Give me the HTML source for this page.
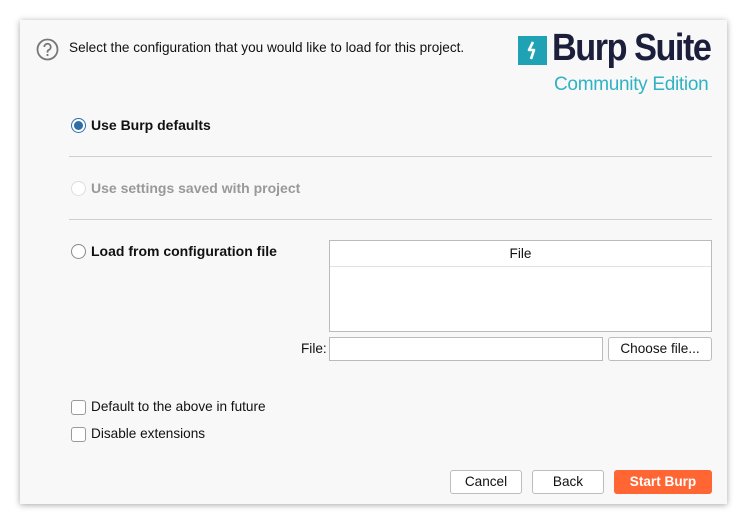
<!DOCTYPE html>
<html><head><meta charset="utf-8"><style>
*{box-sizing:border-box;margin:0;padding:0}
body{width:747px;height:524px;background:#fff;position:relative;font-family:"Liberation Sans",sans-serif;font-size:13.6px;color:#111;overflow:hidden}
.win{position:absolute;left:20px;top:20px;width:707px;height:484px;background:#f8f8f8;box-shadow:0 1px 6px rgba(0,0,0,.35)}
.a{position:absolute}
.rad{position:absolute;width:15px;height:15px;border-radius:50%;border:1px solid #8a8a8a;background:#fff}
.chk{position:absolute;width:15px;height:15px;border-radius:3px;border:1px solid #9a9a9a;background:#fff}
.b{font-weight:bold;font-size:14px}
.hr{position:absolute;left:69px;width:643px;height:1px;background:#cfcfcf}
.btn{position:absolute;height:24px;border:1px solid #bdbdbd;border-radius:3px;background:#fff;text-align:center;line-height:22px;font-size:13.6px}
</style></head><body>
<div class="win"></div>
<svg class="a" style="left:36px;top:38px" width="23" height="23" viewBox="0 0 23 23"><circle cx="11.5" cy="11.5" r="10" fill="none" stroke="#777" stroke-width="1.8"/><path d="M8.3 9a3.2 3.2 0 1 1 4.5 2.9c-1 .5-1.3 1-1.3 2.1v.6" fill="none" stroke="#777" stroke-width="1.8"/><circle cx="11.5" cy="17" r="1.1" fill="#777"/></svg>
<div class="a" style="left:69px;top:40px">Select the configuration that you would like to load for this project.</div>
<div class="a" style="left:518px;top:36px;width:29px;height:29px;background:#1fa3b4"></div>
<svg class="a" style="left:518px;top:36px" width="29" height="29" viewBox="0 0 29 29"><path d="M15 6l-4 8h5l-3 9" fill="none" stroke="#fff" stroke-width="2.6" stroke-linejoin="round"/></svg>
<div class="a" style="left:552px;top:27px;font-size:38px;color:#1b1f3b;letter-spacing:-1.6px;font-weight:bold;white-space:nowrap;transform:scaleX(0.9);transform-origin:0 0">Burp Suite</div>
<div class="a" style="left:554px;top:74px;font-size:19px;color:#2fb3c4;letter-spacing:-0.3px">Community Edition</div>

<div class="rad" style="left:71px;top:118px;border-color:#2f6fa8"></div>
<div class="a" style="left:74px;top:121px;width:9px;height:9px;border-radius:50%;background:#2f6fa8"></div>
<div class="a b" style="left:91px;top:117px">Use Burp defaults</div>
<div class="hr" style="top:156px"></div>
<div class="rad" style="left:71px;top:181px;border-color:#ddd"></div>
<div class="a b" style="left:91px;top:180px;color:#999">Use settings saved with project</div>
<div class="hr" style="top:219px"></div>
<div class="rad" style="left:71px;top:244px"></div>
<div class="a b" style="left:91px;top:243px">Load from configuration file</div>

<div class="a" style="left:329px;top:240px;width:383px;height:92px;border:1px solid #bbb;background:#fff"></div>
<div class="a" style="left:330px;top:266px;width:381px;height:1px;background:#e2e2e2"></div>
<div class="a" style="left:330px;top:246px;width:381px;text-align:center">File</div>
<div class="a" style="left:301px;top:341px">File:</div>
<div class="a" style="left:329px;top:337px;width:274px;height:24px;border:1px solid #bbb;background:#fff"></div>
<div class="btn" style="left:608px;top:337px;width:104px">Choose file...</div>

<div class="chk" style="left:71px;top:400px"></div>
<div class="a" style="left:91px;top:399px">Default to the above in future</div>
<div class="chk" style="left:71px;top:427px"></div>
<div class="a" style="left:91px;top:426px">Disable extensions</div>

<div class="btn" style="left:450px;top:470px;width:72px">Cancel</div>
<div class="btn" style="left:532px;top:470px;width:72px">Back</div>
<div class="btn" style="left:614px;top:470px;width:98px;background:#ff6633;border-color:#ff6633;color:#fff;font-weight:bold">Start Burp</div>
</body></html>
